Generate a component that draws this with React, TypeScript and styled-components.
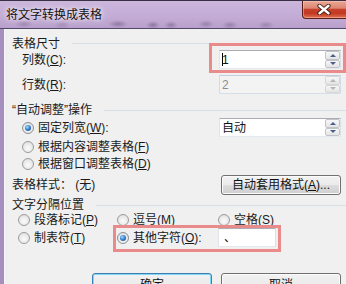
import React from "react";
import styled, { createGlobalStyle, css } from "styled-components";

const Global = createGlobalStyle`
  html, body { margin: 0; padding: 0; background: #f0f0f0; }
  body { font-family: "Liberation Sans", "Noto Sans CJK SC", sans-serif; }
  #root { width: 346px; height: 284px; }
`;

const FONT = `"Liberation Sans", "Noto Sans CJK SC", sans-serif`;

const Window = styled.div`
  width: 346px;
  height: 284px;
  overflow: hidden;
  display: flex;
  flex-direction: column;
  font-family: ${FONT};
  font-size: 12px;
  line-height: 14px;
  color: #1a1a1a;
  background: #f0f0f0;
`;

const TitleBar = styled.div`
  flex: 0 0 auto;
  height: 29px;
  box-sizing: border-box;
  display: flex;
  align-items: flex-start;
  border-top: 1px solid #3a3044;
  border-bottom: 1px solid #54486a;
  background:
    radial-gradient(ellipse 9px 4px at 24px 23px, rgba(118, 96, 140, 0.45), transparent),
    radial-gradient(ellipse 8px 4px at 62px 24px, rgba(118, 96, 140, 0.35), transparent),
    radial-gradient(ellipse 10px 4px at 118px 23px, rgba(108, 88, 130, 0.55), transparent),
    radial-gradient(ellipse 7px 4px at 153px 24px, rgba(108, 88, 130, 0.6), transparent),
    radial-gradient(ellipse 7px 4px at 171px 24px, rgba(108, 88, 130, 0.5), transparent),
    radial-gradient(ellipse 8px 4px at 206px 23px, rgba(108, 88, 130, 0.45), transparent),
    radial-gradient(ellipse 8px 4px at 230px 24px, rgba(108, 88, 130, 0.45), transparent),
    radial-gradient(ellipse 8px 4px at 266px 24px, rgba(108, 88, 130, 0.4), transparent),
    linear-gradient(#cbb6dc 0%, #c4acd6 55%, #b9a0cc 100%);
`;

const Title = styled.div`
  padding-left: 6px;
  height: 27px;
  display: flex;
  align-items: center;
  font-size: 12px;
  color: #111;
  text-shadow: 0 0 4px rgba(255, 255, 255, 0.95), 0 0 8px rgba(255, 255, 255, 0.7);
`;

const CloseButton = styled.div`
  margin-left: auto;
  margin-right: -3px;
  width: 47px;
  height: 18px;
  box-sizing: border-box;
  display: flex;
  align-items: center;
  justify-content: center;
  padding-right: 3px;
  border: 1px solid #5a1f18;
  border-top: none;
  border-radius: 0 0 4px 4px;
  box-shadow: inset 0 0 0 1px rgba(255, 210, 200, 0.45);
  background: linear-gradient(
    #e9a897 0%,
    #dc8670 42%,
    #c5412b 50%,
    #c23722 72%,
    #e2714f 100%
  );
`;

const Frame = styled.div`
  flex: 1;
  display: flex;
  min-height: 0;
  border-left: 4px solid #a58fbe;
`;

const Body = styled.div`
  flex: 1;
  display: flex;
  flex-direction: column;
  padding-top: 8px;
  border-left: 1px solid #f7f5f9;
`;

const GroupHeader = styled.div<{ $h: number; $mt?: number }>`
  flex: 0 0 auto;
  height: ${(p) => p.$h}px;
  margin-top: ${(p) => p.$mt ?? 0}px;
  padding-left: 7px;
  display: flex;
  align-items: center;
  gap: 12px;
  white-space: nowrap;
  &::after {
    content: "";
    flex: 1;
    height: 1px;
    background: #d5dfe5;
  }
`;

const Row = styled.div<{ $h: number; $mt?: number; $pl: number }>`
  flex: 0 0 auto;
  height: ${(p) => p.$h}px;
  margin-top: ${(p) => p.$mt ?? 0}px;
  padding-left: ${(p) => p.$pl}px;
  padding-right: 5px;
  display: flex;
  align-items: center;
  white-space: nowrap;
`;

const Label = styled.span`
  white-space: nowrap;
`;

const Right = styled.div`
  margin-left: auto;
  display: flex;
`;

const Highlight = styled.div<{ $inset: string; $span?: string }>`
  position: relative;
  display: flex;
  align-items: center;
  justify-self: start;
  ${(p) => p.$span && css`grid-column: ${p.$span};`}
  &::after {
    content: "";
    position: absolute;
    inset: ${(p) => p.$inset};
    border: 3px solid #e98b8a;
    pointer-events: none;
    z-index: 2;
  }
`;

const SpinBox = styled.div<{ $disabled?: boolean }>`
  width: 122px;
  height: 19px;
  box-sizing: border-box;
  display: flex;
  align-items: center;
  border: 1px solid;
  border-color: #abadb3 #dbdfe6 #e3e9ef #e2e3ea;
  background: #fff;
  padding-left: 2px;
  color: #111;
  ${(p) =>
    p.$disabled &&
    css`
      border-color: #c3d0dc #d3dde6 #d6dfe8 #d3dde6;
      background: #f3f3f3;
      color: #8e8e8e;
    `}
`;

const SpinValue = styled.span`
  flex: 1;
  display: flex;
  align-items: center;
  height: 100%;
`;

const Caret = styled.span`
  width: 1px;
  height: 13px;
  background: #000;
  margin-right: -1px;
`;

const SpinButtons = styled.div`
  width: 15px;
  height: 17px;
  display: flex;
  flex-direction: column;
`;

const SpinArrow = styled.span<{ $down?: boolean; $disabled?: boolean }>`
  flex: 1;
  display: flex;
  align-items: center;
  justify-content: center;
  box-sizing: border-box;
  border: 1px solid ${(p) => (p.$disabled ? "#d6d6d6" : "#c0c3c8")};
  border-radius: 2px;
  background: linear-gradient(#f7f7f7, #e4e4e4);
  &::before {
    content: "";
    border-left: 3px solid transparent;
    border-right: 3px solid transparent;
    ${(p) =>
      p.$down
        ? css`border-top: 3px solid ${p.$disabled ? "#b5b5b5" : "#4b5f86"};`
        : css`border-bottom: 3px solid ${p.$disabled ? "#b5b5b5" : "#4b5f86"};`}
  }
`;

const TextBox = styled.div`
  width: 58px;
  height: 19px;
  box-sizing: border-box;
  border: 1px solid;
  border-color: #abadb3 #dbdfe6 #e3e9ef #e2e3ea;
  background: #fff;
  padding-left: 5px;
  display: flex;
  align-items: center;
  color: #111;
`;

const RadioLabel = styled.label`
  display: flex;
  align-items: center;
  gap: 4px;
  white-space: nowrap;
`;

const RadioDot = styled.span<{ $checked?: boolean }>`
  position: relative;
  flex: 0 0 auto;
  width: 12px;
  height: 12px;
  box-sizing: border-box;
  border-radius: 50%;
  border: 1px solid #9c9c9c;
  background: radial-gradient(circle at 50% 60%, #fbfbfb 0%, #e6e6e6 65%, #cfcfcf 100%);
  ${(p) =>
    p.$checked &&
    css`
      border-color: #8a8f96;
      &::after {
        content: "";
        position: absolute;
        left: 2px;
        top: 2px;
        width: 6px;
        height: 6px;
        border-radius: 50%;
        background: radial-gradient(circle at 38% 35%, #a6dcff 0%, #3a86cf 45%, #0f3f7a 100%);
      }
    `}
`;

const RadioGrid = styled.div<{ $h: number }>`
  flex: 0 0 auto;
  height: ${(p) => p.$h}px;
  padding-left: 13px;
  display: grid;
  grid-template-columns: 99px 101px 1fr;
  align-items: center;
`;

const OtherGrid = styled.div`
  display: grid;
  grid-template-columns: 101px 58px;
  align-items: center;
`;

const ButtonRow = styled.div<{ $mt: number }>`
  flex: 0 0 auto;
  margin-top: ${(p) => p.$mt}px;
  padding-right: 5px;
  display: flex;
  justify-content: flex-end;
  gap: 9px;
`;

const Button = styled.button<{ $h: number; $default?: boolean }>`
  width: 120px;
  height: ${(p) => p.$h}px;
  box-sizing: border-box;
  padding: 0;
  border: 1px solid #707070;
  border-radius: 3px;
  background: linear-gradient(#f2f2f2 0%, #ebebeb 50%, #dddddd 50%, #cfcfcf 100%);
  box-shadow: inset 0 0 0 1px #fbfbfb;
  font-family: ${FONT};
  font-size: 12px;
  line-height: 14px;
  color: #111;
  white-space: nowrap;
  ${(p) =>
    p.$default &&
    css`
      border-color: #3c7fb1;
      box-shadow: inset 0 0 0 1px #7fd6f6;
    `}
`;

const Spin = ({ value, disabled, caret }: { value: string; disabled?: boolean; caret?: boolean }) => (
  <SpinBox $disabled={disabled}>
    <SpinValue>
      {caret && <Caret />}
      {value}
    </SpinValue>
    <SpinButtons>
      <SpinArrow $disabled={disabled} />
      <SpinArrow $down $disabled={disabled} />
    </SpinButtons>
  </SpinBox>
);

const Radio = ({ checked, children }: { checked?: boolean; children: React.ReactNode }) => (
  <RadioLabel>
    <RadioDot $checked={checked} />
    <span>{children}</span>
  </RadioLabel>
);

export default function App() {
  return (
    <>
      <Global />
      <Window>
        <TitleBar>
          <Title>将文字转换成表格</Title>
          <CloseButton>
            <svg width="14" height="11" viewBox="0 0 14 11">
              <path d="M2.5 1.8 L11.5 9.2 M11.5 1.8 L2.5 9.2" stroke="#3e1710" strokeWidth="4.2" strokeLinecap="round" />
              <path d="M2.5 1.8 L11.5 9.2 M11.5 1.8 L2.5 9.2" stroke="#ffffff" strokeWidth="2.4" strokeLinecap="round" />
            </svg>
          </CloseButton>
        </TitleBar>
        <Frame>
          <Body>
            <GroupHeader $h={13}>表格尺寸</GroupHeader>
            <Row $h={19} $pl={17}>
              <Label>
                列数(<u>C</u>):
              </Label>
              <Right>
                <Highlight $inset="-7px -5px -4px -10px">
                  <Spin value="1" caret />
                </Highlight>
              </Right>
            </Row>
            <Row $h={19} $mt={6} $pl={17}>
              <Label>
                行数(<u>R</u>):
              </Label>
              <Right>
                <Spin value="2" disabled />
              </Right>
            </Row>

            <GroupHeader $h={14} $mt={9}>“自动调整”操作</GroupHeader>
            <Row $h={19} $mt={1} $pl={17}>
              <Radio checked>
                固定列宽(<u>W</u>):
              </Radio>
              <Right>
                <Spin value="自动" />
              </Right>
            </Row>
            <Row $h={16} $mt={2} $pl={17}>
              <Radio>
                根据内容调整表格(<u>F</u>)
              </Radio>
            </Row>
            <Row $h={16} $mt={1} $pl={17}>
              <Radio>
                根据窗口调整表格(<u>D</u>)
              </Radio>
            </Row>
            <Row $h={20} $mt={3} $pl={7}>
              <Label>表格样式： (无)</Label>
              <Right>
                <Button $h={20}>
                  自动套用格式(<u>A</u>)...
                </Button>
              </Right>
            </Row>

            <GroupHeader $h={14} $mt={3}>文字分隔位置</GroupHeader>
            <RadioGrid $h={16}>
              <Radio>
                段落标记(<u>P</u>)
              </Radio>
              <Radio>
                逗号(<u>M</u>)
              </Radio>
              <Radio>
                空格(<u>S</u>)
              </Radio>
            </RadioGrid>
            <RadioGrid $h={19}>
              <Radio>
                制表符(<u>T</u>)
              </Radio>
              <Highlight $inset="-3px -5px -5px -4px" $span="2 / 4">
                <OtherGrid>
                  <Radio checked>
                    其他字符(<u>O</u>):
                  </Radio>
                  <TextBox>、</TextBox>
                </OtherGrid>
              </Highlight>
            </RadioGrid>

            <ButtonRow $mt={26}>
              <Button $h={23} $default>
                确定
              </Button>
              <Button $h={23}>取消</Button>
            </ButtonRow>
          </Body>
        </Frame>
      </Window>
    </>
  );
}
